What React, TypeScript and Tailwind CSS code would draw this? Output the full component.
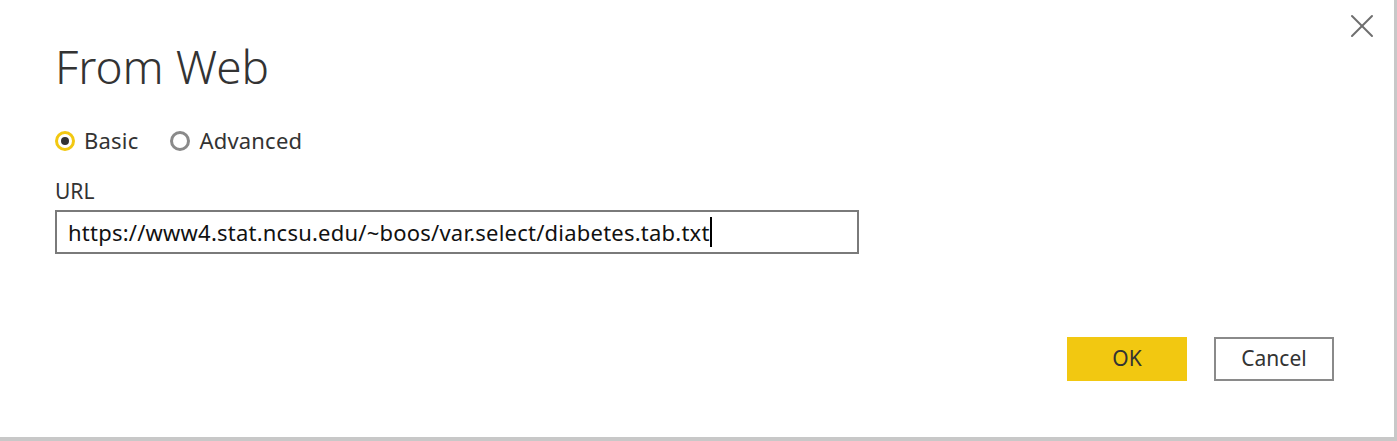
import { X } from 'lucide-react';

function Radio({ checked, label }: { checked?: boolean; label: string }) {
  return (
    <label className="flex items-center gap-[9px]">
      <span
        className={
          checked
            ? 'flex h-[20px] w-[20px] items-center justify-center rounded-full border-[3px] border-[#f2c811]'
            : 'flex h-[20px] w-[20px] items-center justify-center rounded-full border-[3px] border-[#8a8a8a]'
        }
      >
        {checked && <span className="h-[8px] w-[8px] rounded-full bg-[#333333]" />}
      </span>
      <span className="text-[22px] tracking-[0.2px] text-[#333333]">{label}</span>
    </label>
  );
}

export default function App() {
  return (
    <div className="h-[441px] w-[1397px] overflow-hidden bg-[#c8c8c8] font-['Segoe_UI','Noto_Sans',sans-serif]">
      <div className="relative h-[437px] w-[1394px] bg-white pl-[55px]">
        <button className="absolute right-[12px] top-[6px] text-[#6e6e6e]">
          <X size={40} strokeWidth={1.2} />
        </button>

        <h1 className="pt-[36px] text-[46px] font-light leading-[60px] text-[#333333]">From Web</h1>

        <div className="mt-[28px] flex items-center gap-[32px]">
          <Radio checked label="Basic" />
          <Radio label="Advanced" />
        </div>

        <div className="mt-[20px] text-[21px] leading-[28px] text-[#333333]">URL</div>
        <div className="mt-[5px] flex h-[44px] w-[804px] items-center border-2 border-[#7a7a7a] pl-[11px]">
          <span className="text-[22px] tracking-[0.22px] text-[#111111]">
            https://www4.stat.ncsu.edu/~boos/var.select/diabetes.tab.txt
          </span>
          <span className="h-[30px] w-[2px] bg-black" />
        </div>

        <div className="mt-[83px] flex justify-end gap-[27px] pr-[60px]">
          <button className="h-[44px] w-[120px] bg-[#f2c811] text-[21px] text-[#333333]">OK</button>
          <button className="h-[44px] w-[120px] border-2 border-[#8a8a8a] bg-white text-[21px] text-[#333333]">
            Cancel
          </button>
        </div>
      </div>
    </div>
  );
}
